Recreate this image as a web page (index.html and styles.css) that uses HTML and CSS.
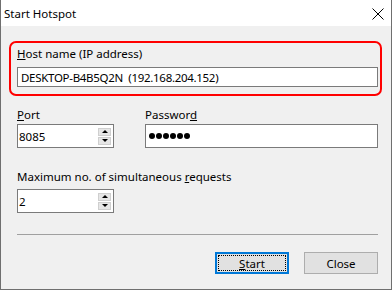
FILE: index.html
```html
<!DOCTYPE html>
<html lang="en">

<head>
    <meta charset="utf-8">
    <title>Start Hotspot</title>
    <link rel="stylesheet" href="styles.css">
</head>

<body>
    <div class="window">
        <div class="titlebar">
            <span class="title">Start Hotspot</span>
            <svg class="close-icon" width="12" height="12" viewBox="0 0 12 12">
                <path d="M0.5 0.5 L11.5 11.5 M11.5 0.5 L0.5 11.5" stroke="#000" stroke-width="1" fill="none" />
            </svg>
        </div>

        <div class="content">
            <div class="field host-field">
                <div class="label"><u>H</u>ost name (IP address)</div>
                <div class="textbox host-box">DESKTOP-B4B5Q2N&nbsp; (192.168.204.152)</div>
            </div>

            <div class="row">
                <div class="field port-field">
                    <div class="label"><u>P</u>ort</div>
                    <div class="textbox spin-box">
                        <span class="value">8085</span>
                        <div class="spin-buttons">
                            <span class="spin-btn"><span class="arrow-up"></span></span>
                            <span class="spin-btn"><span class="arrow-down"></span></span>
                        </div>
                    </div>
                </div>
                <div class="field password-field">
                    <div class="label">Passwor<u>d</u></div>
                    <div class="textbox password-box">
                        <span class="dot"></span><span class="dot"></span><span class="dot"></span><span class="dot"></span><span class="dot"></span><span class="dot"></span>
                    </div>
                </div>
            </div>

            <div class="field requests-field">
                <div class="label">Maximum no. of simultaneous <u>r</u>equests</div>
                <div class="textbox spin-box">
                    <span class="value">2</span>
                    <div class="spin-buttons">
                        <span class="spin-btn"><span class="arrow-up"></span></span>
                        <span class="spin-btn"><span class="arrow-down"></span></span>
                    </div>
                </div>
            </div>

            <div class="separator"></div>

            <div class="buttons">
                <button type="button" class="btn btn-default"><span class="focus-rect"><u>S</u>tart</span></button>
                <button type="button" class="btn">Close</button>
            </div>
        </div>
    </div>
</body>

</html>
```

FILE: styles.css
```css
* {
    margin: 0;
    padding: 0;
    box-sizing: border-box;
}

body {
    font-family: "Noto Sans", "Liberation Sans", sans-serif;
    font-size: 11.5px;
    line-height: 15px;
    color: #000;
    background: #fff;
}

.window {
    width: 392px;
    height: 290px;
    border: 1px solid #6f6f6f;
    border-top: none;
    background: #f0f0f0;
    display: flex;
    flex-direction: column;
}

.titlebar {
    height: 26px;
    background: #fff;
    display: flex;
    align-items: center;
    justify-content: space-between;
    padding: 0 7px 0 3px;
}

.title {
    padding-top: 1px;
}

.close-icon {
    display: block;
    margin-top: 1px;
}

.content {
    padding: 20px 13px 0 16px;
    display: flex;
    flex-direction: column;
}

.field {
    display: flex;
    flex-direction: column;
}

.label {
    height: 15px;
}

.textbox {
    background: #fff;
    border: 1px solid #7a7a7a;
    display: flex;
    align-items: center;
}

/* red highlight drawn round the host name group */
.host-field {
    position: relative;
}

.host-field::after {
    content: "";
    position: absolute;
    top: -5px;
    left: -8px;
    right: -4px;
    bottom: -9px;
    border: 2px solid #ff0000;
    border-radius: 7px;
}

.host-box {
    margin-top: 6px;
    height: 20px;
    padding-left: 3px;
    letter-spacing: -0.3px;
}

.row {
    display: flex;
    gap: 31px;
    margin-top: 20px;
}

.port-field {
    width: 97px;
}

.password-field {
    flex: 1;
}

.spin-box {
    margin-top: 2px;
    height: 24px;
    padding: 0 2px 0 1px;
    justify-content: space-between;
}

.spin-buttons {
    display: flex;
    flex-direction: column;
    gap: 1px;
}

.spin-btn {
    width: 13px;
    height: 8px;
    background: #e6e6e6;
    border: 1px solid #cfcfcf;
    display: flex;
    align-items: center;
    justify-content: center;
}

.arrow-up {
    border-left: 3px solid transparent;
    border-right: 3px solid transparent;
    border-bottom: 3px solid #000;
}

.arrow-down {
    border-left: 3px solid transparent;
    border-right: 3px solid transparent;
    border-top: 3px solid #000;
}

.password-box {
    margin-top: 2px;
    height: 24px;
    padding-left: 3px;
    gap: 1px;
}

.dot {
    width: 6px;
    height: 6px;
    border-radius: 50%;
    background: #000;
}

.requests-field {
    margin-top: 21px;
    width: 97px;
    white-space: nowrap;
}

.requests-field .spin-box {
    margin-top: 5px;
}

.separator {
    margin-top: 21px;
    height: 1px;
    background: #a0a0a0;
}

.buttons {
    display: flex;
    justify-content: flex-end;
    gap: 15px;
    margin-top: 17px;
}

.btn {
    width: 74px;
    height: 22px;
    font: inherit;
    color: #000;
    background: #e1e1e1;
    border: 1px solid #adadad;
}

.btn-default {
    border: 2px solid #0078d7;
    padding: 1px;
}

.focus-rect {
    display: flex;
    align-items: center;
    justify-content: center;
    height: 100%;
    border: 1px dotted #000;
}
```
